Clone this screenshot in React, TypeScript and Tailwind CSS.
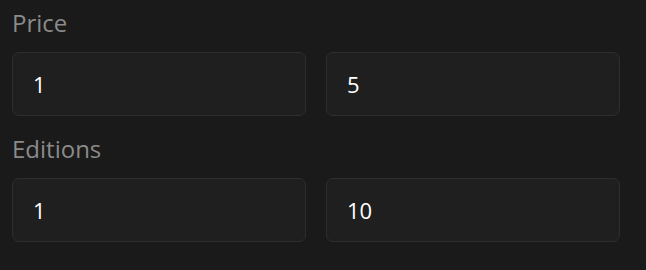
import React from 'react'

const FIELDS = [
  { label: 'Price', min: '1', max: '5' },
  { label: 'Editions', min: '1', max: '10' },
]

function Box({ value }: { value: string }) {
  return (
    <input
      readOnly
      value={value}
      className="h-[64px] w-full min-w-0 rounded-[7px] border border-[#2e2e2e] bg-[#1f1f1f] px-[20px] font-['Open_Sans',sans-serif] text-[22px] text-white outline-none"
    />
  )
}

export default function App() {
  return (
    <div className="h-[270px] w-[646px] bg-[#1a1a1a] pl-[12px] pr-[26px] pt-[7px] font-['Open_Sans',sans-serif]">
      {FIELDS.map((f) => (
        <div key={f.label} className="mb-[17px]">
          <label className="block text-[24px] leading-[32px] text-[#8a8a8a]">{f.label}</label>
          <div className="mt-[13px] grid grid-cols-2 gap-[20px]">
            <Box value={f.min} />
            <Box value={f.max} />
          </div>
        </div>
      ))}
    </div>
  )
}
